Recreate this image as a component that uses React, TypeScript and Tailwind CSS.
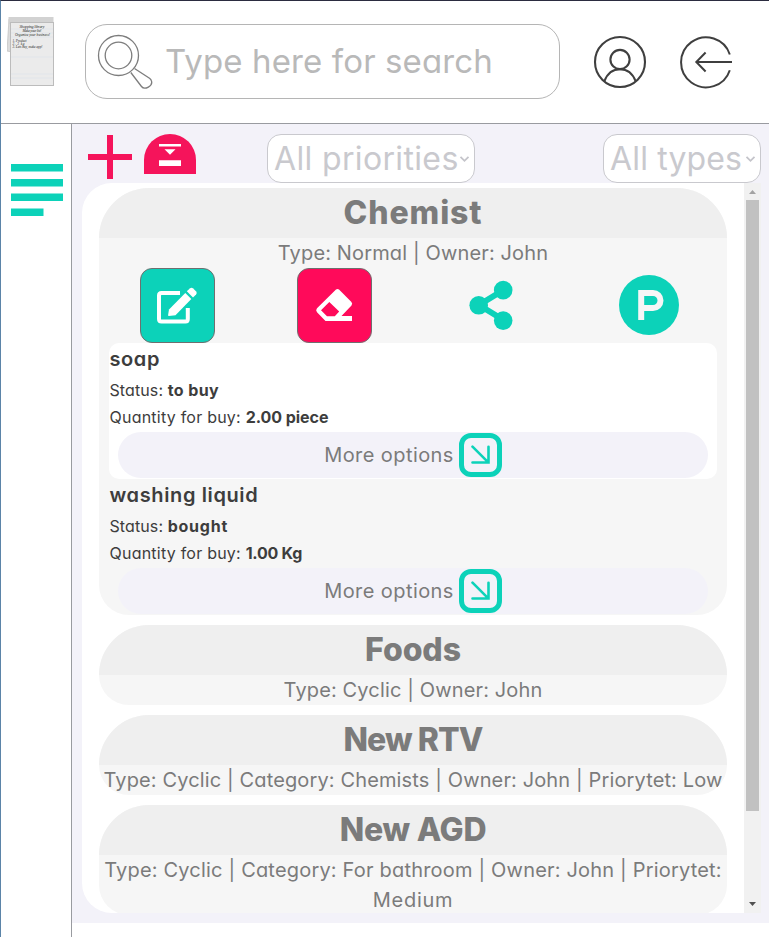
import type { ReactNode } from "react";

function Logo() {
  return (
    <svg className="ml-[6px] mt-[15px] shrink-0" width="50" height="72" viewBox="0 0 50 72">
      <path d="M2 3 L5 3 L5 36 L0 35Z" fill="#dcdcdc" stroke="#c4c4c4" strokeWidth="0.8" />
      <rect x="1.5" y="1" width="45" height="7" fill="#d2d2d2" />
      <rect x="3.5" y="6.5" width="43" height="63" fill="#ebebeb" stroke="#bcbcbc" />
      <path d="M4 13h42M4 17h42M4 21h42M4 41h42M4 58h42M4 62h42" stroke="#dce3e9" strokeWidth="0.7" />
      <g fill="#222" fontFamily="Liberation Serif, serif" fontStyle="italic">
        <text x="12.5" y="11.5" fontSize="4" textLength="25">Shopping library</text>
        <text x="15.5" y="16" fontSize="3.6" textLength="19">Make your list!</text>
        <text x="8" y="19.5" fontSize="3.6" textLength="35">Organize your business!</text>
        <text x="5.5" y="25.5" fontSize="3.4" textLength="14">1. Product</text>
        <text x="5.5" y="28.8" fontSize="3.4" textLength="12">2. 3 kg</text>
        <text x="5.5" y="32" fontSize="3.4" textLength="30">3. Lets buy, make app!</text>
      </g>
    </svg>
  );
}

function Header() {
  return (
    <header className="flex h-[123px] items-start border-b border-[#999ba0]">
      <Logo />
      <div className="ml-[28px] mt-[23px] flex h-[75px] w-[475px] shrink-0 items-center rounded-[22px] border border-[#b5b5b5] bg-white">
        <svg className="ml-[11px] shrink-0" width="56" height="56" viewBox="0 0 56 56" fill="none" stroke="#7d7d7d" strokeWidth="1.3">
          <circle cx="21.5" cy="21.5" r="20" />
          <circle cx="21.5" cy="21.5" r="13.3" />
          <path d="M33.8 38.5 L44.5 52.5 C47.5 56.5 56.5 52 54.3 46.5 C54 45.5 53.5 45 52.5 44.2 L37.5 34.5" />
        </svg>
        <span className="mb-[2px] ml-[12px] whitespace-nowrap text-[33px] leading-[48px] tracking-[0.12px] text-[#b9b9b9]">Type here for search</span>
      </div>
      <svg className="ml-[33px] mt-[34px] shrink-0" width="54" height="54" viewBox="0 0 54 54" fill="none" stroke="#3f3f3f" strokeWidth="2.1">
        <circle cx="27" cy="27" r="25" />
        <circle cx="27" cy="24.5" r="9.6" />
        <path d="M11.5 46 C14.5 38 20 34.2 27 34.2 C34 34.2 39.5 38 42.5 46" />
      </svg>
      <svg className="ml-[32px] mt-[34px] shrink-0" width="56" height="54" viewBox="0 0 56 54" fill="none" stroke="#3f3f3f" strokeWidth="2">
        <path d="M50.8 19.5 A25 25 0 1 0 50.8 35.2" />
        <path d="M53 27 H17.5 M26.6 17.5 L17.3 27 L26.6 36.5" />
      </svg>
    </header>
  );
}

function Sidebar() {
  return (
    <aside className="flex w-[71px] shrink-0 flex-col border-r border-[#999ba0] pl-[10px] pt-[40px]">
      <svg width="52" height="52" viewBox="0 0 52 52" fill="#0cd2b9">
        <path d="M0 0h52v7.5H0zM0 14.9h52v7.5H0zM0 29.6h52v7.5H0zM0 44.5h32.5v7.5H0z" />
      </svg>
    </aside>
  );
}

function Select({ label, className }: { label: string; className: string }) {
  return (
    <div className={"mt-[10px] flex h-[49px] items-center rounded-[14px] border border-[#c9c9ce] bg-white pl-[6px] text-[32px] text-[#c9c9ce] " + className}>
      <span className="whitespace-nowrap leading-[47px]">{label}</span>
      <svg className="ml-auto mr-[4px] shrink-0" width="11" height="8" viewBox="0 0 11 8" fill="none" stroke="#c4c4ca" strokeWidth="1.8">
        <path d="M1.5 1.8 L5.5 5.8 L9.5 1.8" />
      </svg>
    </div>
  );
}

function Toolbar() {
  return (
    <div className="flex h-[59px] items-start pl-[16px]">
      <svg className="mt-[11px] shrink-0" width="44" height="44" viewBox="0 0 44 44" fill="#f5145b">
        <rect x="19" y="0" width="6" height="44" />
        <rect x="0" y="19" width="44" height="6" />
      </svg>
      <svg className="ml-[12px] mt-[10px] shrink-0" width="52" height="40" viewBox="0 0 52 40">
        <path d="M0 40 V26 A26 26 0 0 1 52 26 V40Z" fill="#f5145b" />
        <path d="M15 10h22v2.6H15zM20.5 15.3h11L26 20.8zM15 26.3h22v5.7H15z" fill="#fff" />
      </svg>
      <Select label="All priorities" className="ml-[71px] w-[208px] tracking-[0.35px]" />
      <Select label="All types" className="ml-[128px] w-[158px] tracking-[0.15px]" />
    </div>
  );
}

function Card({ title, titleClass, info, children }: { title: string; titleClass: string; info: ReactNode; children?: ReactNode }) {
  return (
    <section className="shrink-0 overflow-hidden rounded-b-[30px] rounded-t-[50px] bg-[#f6f6f6] text-[#7b7b7b]">
      <h2 className={"h-[50px] bg-[#efefef] text-center text-[32px] font-extrabold leading-[50px] " + titleClass}>{title}</h2>
      <div className="whitespace-nowrap text-center text-[20px] leading-[30px]">{info}</div>
      {children}
    </section>
  );
}

function Actions() {
  return (
    <div className="flex h-[75px] items-center">
      <div className="ml-[41px] flex h-[75px] w-[75px] items-center justify-center rounded-[12px] border border-[#6f6f6f] bg-[#0cd2b9] pb-[2px] pr-[2px]">
        <svg width="42" height="38" viewBox="0 0 42 38">
          <path d="M24 7 H5.5 Q3 7 3 9.5 V33 Q3 35.5 5.5 35.5 H29.5 Q31.8 35.5 31.8 33 V22" fill="none" stroke="#fff" strokeWidth="4" />
          <path d="M13 23.5 L29.3 7 L35.3 13 L19.5 29.3 L12.8 30 Q12 30 12.1 29Z" fill="#fff" />
          <path d="M30.8 5.3 L33.8 2.4 Q35.5 1 37.2 2.4 L40.2 5.4 Q41.4 7 40.1 8.5 L37 11.5Z" fill="#fff" />
        </svg>
      </div>
      <div className="ml-[82px] flex h-[75px] w-[75px] items-center justify-center rounded-[12px] border border-[#6f6f6f] bg-[#ff0a5a] pb-[2px] pr-[2px]">
        <svg width="38" height="34" viewBox="0 0 38 34">
          <path
            fillRule="evenodd"
            fill="#fff"
            d="M21 1.6 Q22.5 0.3 24 1.6 L36.2 13.8 Q38 15.6 36.5 17.4 L26.5 28 H37 V33 H10.5 L2 24.2 Q0.3 22.2 2 20.3Z M14.3 14 L6 22.3 L12 28.2 H19.8 L24.2 23.6Z"
          />
        </svg>
      </div>
      <svg className="mb-[2px] ml-[97px]" width="45" height="50" viewBox="0 0 45 50" fill="#0cd2b9">
        <path d="M34.5 10 L10 25 L34.5 40" fill="none" stroke="#0cd2b9" strokeWidth="6" />
        <circle cx="9.7" cy="25.3" r="9.3" />
        <circle cx="34.2" cy="10.1" r="9.3" />
        <circle cx="34.2" cy="40.6" r="9.3" />
      </svg>
      <svg className="mb-px ml-[105px]" width="60" height="60" viewBox="0 0 60 60">
        <circle cx="30" cy="30" r="30" fill="#0cd2b9" />
        <path d="M22.2 45 V18 H34 A7.5 7.5 0 0 1 34 33 H24" fill="none" stroke="#f6f6f6" strokeWidth="6" />
      </svg>
    </div>
  );
}

function Item({
  name,
  status,
  quantity,
  nameClass,
  statusClass,
  quantityClass,
  className,
}: {
  name: string;
  status: string;
  quantity: string;
  nameClass: string;
  statusClass: string;
  quantityClass: string;
  className: string;
}) {
  return (
    <div className={"mx-[10px] flex h-[136px] flex-col rounded-[10px] text-[#3d3d3d] " + className}>
      <div className={"h-[34px] pl-[0.5px] text-[20px] font-semibold leading-[32px] " + nameClass}>{name}</div>
      <div className="pl-[0.5px] text-[16px] leading-[27px]">
        <span className="tracking-[0.1px]">Status: </span>
        <b className={statusClass}>{status}</b>
      </div>
      <div className="pl-[0.5px] text-[16px] leading-[27px]">
        <span className="tracking-[0.23px]">Quantity for buy: </span>
        <b className={quantityClass}>{quantity}</b>
      </div>
      <div className="mx-[9px] mt-px flex h-[46px] items-center justify-center rounded-[23px] bg-[#f3f2f9] text-[20px] tracking-[0.42px] text-[#7b7b7b]">
        <span>More options</span>
        <div className="ml-[5px] flex h-[44px] w-[43px] items-center justify-center rounded-[12px] border-[5px] border-[#0cd2b9]">
          <svg width="21" height="20" viewBox="0 0 21 20" fill="none" stroke="#0cd2b9" strokeWidth="2.6" strokeLinecap="round">
            <path d="M2.5 1.7 L18 17.2 M18.5 1.7 V17.5 H2.5" />
          </svg>
        </div>
      </div>
    </div>
  );
}

function Scrollbar() {
  return (
    <div className="flex w-[17px] shrink-0 flex-col items-center bg-[#f1f1f1]">
      <svg className="shrink-0" width="17" height="17" viewBox="0 0 17 17">
        <path d="M5 11 L8.5 7 L12 11Z" fill="#a3a3a3" />
      </svg>
      <div className="h-[611px] w-[13px] shrink-0 bg-[#c1c1c1]" />
      <svg className="mt-auto shrink-0" width="17" height="17" viewBox="0 0 17 17">
        <path d="M5 6 H12 L8.5 10Z" fill="#505050" />
      </svg>
    </div>
  );
}

export default function App() {
  return (
    <div className="flex h-[937px] w-[769px] flex-col overflow-hidden border-l border-t border-l-[#5b84a8] border-t-[#2b2c40] bg-white font-['Inter',sans-serif] [font-feature-settings:'cv11']">
      <Header />
      <div className="flex min-h-0 flex-1">
        <Sidebar />
        <main className="flex h-[799px] min-w-0 flex-1 flex-col bg-[#f3f2f9]">
          <Toolbar />
          <div className="ml-[10px] flex h-[730px] w-[679px] overflow-hidden rounded-l-[30px] bg-white">
            <div className="flex min-w-0 flex-1 flex-col gap-[10px] overflow-hidden pl-[17px] pr-[17px] pt-[5px]">
              <Card title="Chemist" titleClass="tracking-[0.9px]" info={<span className="tracking-[0.14px]">Type: Normal | Owner: John</span>}>
                <Actions />
                <Item
                  name="soap"
                  status="to buy"
                  quantity="2.00 piece"
                  nameClass="tracking-[0.6px]"
                  statusClass="tracking-[0.4px]"
                  quantityClass="tracking-[-0.05px]"
                  className="bg-white"
                />
                <Item
                  name="washing liquid"
                  status="bought"
                  quantity="1.00 Kg"
                  nameClass="tracking-[0.62px]"
                  statusClass="tracking-[0.75px]"
                  quantityClass="tracking-[-0.25px]"
                  className=""
                />
              </Card>
              <Card title="Foods" titleClass="tracking-[-0.1px]" info={<span className="tracking-[0.14px]">Type: Cyclic | Owner: John</span>} />
              <Card
                title="New RTV"
                titleClass="tracking-[-0.9px]"
                info={<span className="tracking-[0.13px]">Type: Cyclic | Category: Chemists | Owner: John | Priorytet: Low</span>}
              />
              <Card
                title="New AGD"
                titleClass="tracking-[-0.25px]"
                info={
                  <>
                    <span className="tracking-[0.19px]">Type: Cyclic | Category: For bathroom | Owner: John | Priorytet:</span>
                    <br />
                    <span className="tracking-[0.7px]">Medium</span>
                  </>
                }
              />
            </div>
            <Scrollbar />
          </div>
        </main>
      </div>
    </div>
  );
}
